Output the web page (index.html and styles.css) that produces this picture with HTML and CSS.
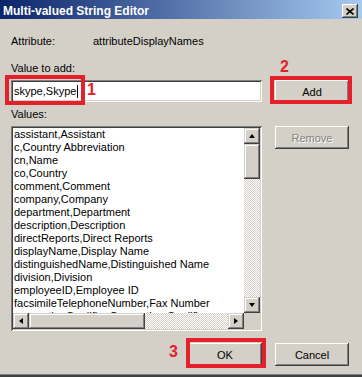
FILE: index.html
```html
<!DOCTYPE html>
<html>
<head>
<meta charset="utf-8">
<link rel="stylesheet" href="styles.css">
</head>
<body>
<div class="window">
  <div class="titlebar">
    <span class="title">Multi-valued String Editor</span>
    <span class="close"><svg width="8" height="7" viewBox="0 0 8 7"><path d="M0.5 0.5 L7.5 6.5 M7.5 0.5 L0.5 6.5" stroke="#000" stroke-width="1.6" fill="none"/></svg></span>
  </div>
  <div class="body">
    <div class="attr"><span class="attr-label">Attribute:</span><span>attributeDisplayNames</span></div>
    <div class="label lbl-value">Value to add:</div>
    <div class="row row-add">
      <div class="input"><span>skype,Skype</span><span class="caret"></span></div>
      <button class="btn">Add</button>
    </div>
    <div class="label lbl-values">Values:</div>
    <div class="row row-list">
      <div class="listbox">
        <div class="items">
          <div>assistant,Assistant</div>
          <div>c,Country Abbreviation</div>
          <div>cn,Name</div>
          <div>co,Country</div>
          <div>comment,Comment</div>
          <div>company,Company</div>
          <div>department,Department</div>
          <div>description,Description</div>
          <div>directReports,Direct Reports</div>
          <div>displayName,Display Name</div>
          <div>distinguishedName,Distinguished Name</div>
          <div>division,Division</div>
          <div>employeeID,Employee ID</div>
          <div>facsimileTelephoneNumber,Fax Number</div>
          <div>generationQualifier,Generation Qualifier</div>
        </div>
        <div class="vscroll">
          <span class="sbtn"><span class="arrow up"></span></span>
          <span class="vthumb"></span>
          <span class="track"></span>
          <span class="sbtn"><span class="arrow down"></span></span>
        </div>
        <div class="hscroll">
          <span class="sbtn"><span class="arrow left"></span></span>
          <span class="hthumb"></span>
          <span class="track"></span>
          <span class="sbtn"><span class="arrow right"></span></span>
        </div>
        <div class="corner"></div>
      </div>
      <div class="side"><button class="btn disabled">Remove</button></div>
    </div>
    <div class="row footer">
      <button class="btn ok">OK</button>
      <button class="btn">Cancel</button>
    </div>
  </div>
  <div class="mark box1"></div>
  <div class="num num1">1</div>
  <div class="mark box2"></div>
  <div class="num num2">2</div>
  <div class="mark box3"></div>
  <div class="num num3">3</div>
</div>
</body>
</html>
```
FILE: styles.css
```css
* { box-sizing: border-box; }
html, body { margin: 0; padding: 0; }
body { width: 362px; height: 377px; overflow: hidden; background: #d4d0c8; }

.window {
  position: relative;
  width: 362px;
  height: 377px;
  background: #d4d0c8;
  font-family: "Liberation Sans", Arial, sans-serif;
  font-size: 11px;
  color: #000;
  border-bottom: 2px solid #404040;
  box-shadow: inset 0 -1px 0 #808080;
}

.titlebar {
  height: 19px;
  padding: 3px 4px 0 3px;
  display: flex;
  justify-content: space-between;
  align-items: flex-start;
  background: linear-gradient(to right, #0a246a, #a6caf0);
}
.title {
  color: #fff;
  font-weight: bold;
  font-size: 12px;
  line-height: 16px;
}
.close {
  width: 16px;
  height: 14px;
  margin-top: 1px;
  background: #d4d0c8;
  box-shadow: inset -1px -1px #404040, inset 1px 1px #fff, inset -2px -2px #808080, inset 2px 2px #d4d0c8;
  display: flex;
  align-items: center;
  justify-content: center;
}
.close svg { display: block; margin-left: 0px; }

.body { padding: 0 13px 0 11px; }

.attr { margin-top: 16px; line-height: 13px; height: 13px; display: flex; }
.attr-label { width: 82px; }

.label { line-height: 13px; height: 13px; }
.lbl-value { margin-top: 14px; }
.lbl-values { margin-top: 5px; }

.row {
  display: grid;
  grid-template-columns: 1fr 74px;
  column-gap: 13px;
}
.row-add { margin-top: 5px; align-items: start; }
.row-list { margin-top: 5px; }

.input {
  height: 22px;
  background: #fff;
  box-shadow: inset 1px 1px #808080, inset -1px -1px #fff, inset 2px 2px #404040, inset -2px -2px #d4d0c8;
  padding: 0 3px;
  display: flex;
  align-items: center;
  line-height: 13px;
}
.caret { width: 1px; height: 13px; background: #000; margin-left: 1px; }

.btn {
  font-family: "Liberation Sans", Arial, sans-serif;
  font-size: 11px;
  color: #000;
  height: 23px;
  width: 74px;
  padding: 0;
  border: none;
  background: #d4d0c8;
  box-shadow: inset -1px -1px #404040, inset 1px 1px #fff, inset -2px -2px #808080, inset 2px 2px #d4d0c8;
}
.btn.disabled { color: #808080; text-shadow: 1px 1px 0 #fff; }

.listbox {
  height: 205px;
  background: #fff;
  padding: 2px;
  box-shadow: inset 1px 1px #808080, inset -1px -1px #fff, inset 2px 2px #404040, inset -2px -2px #d4d0c8;
  display: grid;
  grid-template-columns: 1fr 16px;
  grid-template-rows: 1fr 16px;
}
.items {
  overflow: hidden;
  padding-left: 1px;
  line-height: 13px;
  white-space: nowrap;
}
.vscroll { display: flex; flex-direction: column; }
.hscroll { display: flex; flex-direction: row; }
.track {
  flex: 1;
  background: repeating-conic-gradient(#d4d0c8 0 25%, #fff 0 50%) 0 0 / 2px 2px;
}
.sbtn, .vthumb, .hthumb {
  background: #d4d0c8;
  box-shadow: inset -1px -1px #404040, inset 1px 1px #d4d0c8, inset -2px -2px #808080, inset 2px 2px #fff;
}
.sbtn {
  width: 16px;
  height: 16px;
  flex: none;
  display: flex;
  align-items: center;
  justify-content: center;
}
.vthumb { height: 35px; flex: none; }
.hthumb { width: 116px; flex: none; }
.corner { background: #d4d0c8; }

.arrow { width: 0; height: 0; border-style: solid; }
.arrow.up { border-width: 0 3.5px 4px 3.5px; border-color: transparent transparent #000 transparent; margin-top: -1px; }
.arrow.down { border-width: 4px 3.5px 0 3.5px; border-color: #000 transparent transparent transparent; }
.arrow.left { border-width: 3.5px 4px 3.5px 0; border-color: transparent #000 transparent transparent; margin-left: -1px; }
.arrow.right { border-width: 3.5px 0 3.5px 4px; border-color: transparent transparent transparent #000; }

.footer { margin-top: 12px; }
.ok { justify-self: end; }

.mark {
  position: absolute;
  border: 4px solid #e4202b;
}
.box1 { left: 5px; top: 75px; width: 80px; height: 30px; }
.box2 { left: 270px; top: 76px; width: 82px; height: 28px; }
.box3 { left: 186px; top: 338px; width: 80px; height: 30px; }
.num {
  position: absolute;
  color: #e4202b;
  font-weight: bold;
  font-size: 16px;
  line-height: 16px;
}
.num1 { left: 87px; top: 82px; }
.num2 { left: 280px; top: 59px; }
.num3 { left: 169px; top: 344px; }
```
